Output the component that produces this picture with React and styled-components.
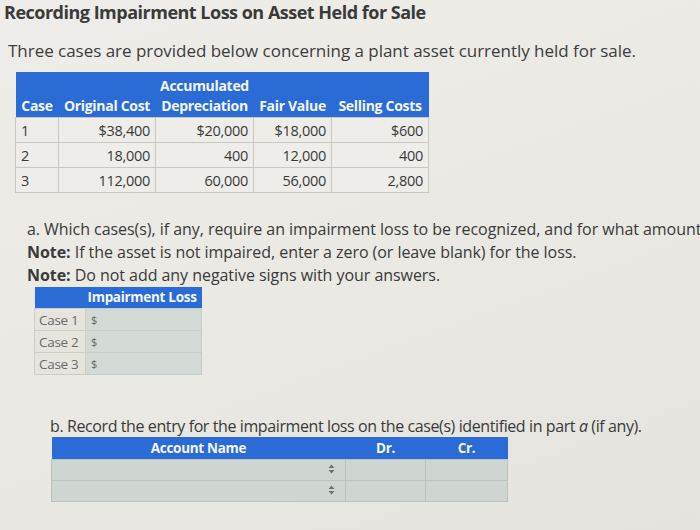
import React from "react";
import styled, { createGlobalStyle } from "styled-components";

const GlobalStyle = createGlobalStyle`
  html, body {
    margin: 0;
    padding: 0;
    background: #ebeae5;
  }
  body {
    font-family: "Open Sans", "Liberation Sans", sans-serif;
    color: #363636;
  }
`;

const Page = styled.div`
  width: 700px;
  height: 530px;
  overflow: hidden;
  background: linear-gradient(160deg, #eeede9 0%, #e9e8e2 60%, #e4e3dd 100%);
  white-space: nowrap;
`;

const Title = styled.h1`
  margin: 0;
  padding: 0 0 0 4px;
  font-size: 18px;
  line-height: 25px;
  font-weight: 700;
  letter-spacing: -0.5px;
  color: #3a3a3a;
`;

const Intro = styled.p`
  margin: 14px 0 0 8px;
  font-size: 17px;
  line-height: 23px;
  letter-spacing: -0.03px;
  color: #3c3c3c;
`;

const Table = styled.table`
  border-collapse: collapse;
  table-layout: fixed;
  margin-left: ${(p) => p.$left}px;
  margin-top: ${(p) => p.$top}px;
  width: ${(p) => p.$width}px;
  letter-spacing: -0.3px;
`;

const Head = styled.th`
  background: #2b6bd6;
  color: #f4f6fb;
  font-weight: 700;
  font-size: ${(p) => p.$size || 14}px;
  height: ${(p) => p.$h || 22}px;
  padding: 0 ${(p) => p.$pad ?? 3}px;
  text-align: ${(p) => p.$align || "center"};
  vertical-align: ${(p) => p.$valign || "middle"};
  line-height: 17px;
`;

const Cell = styled.td`
  background: #eeede9;
  border: 1px solid #c8c8c2;
  height: 24px;
  padding: 0 5px;
  font-size: 14.5px;
  color: #3a3a3a;
  text-align: ${(p) => p.$align || "right"};
`;

const Question = styled.div`
  margin: ${(p) => p.$top}px 0 0 ${(p) => p.$left}px;
  font-size: 16px;
  line-height: 23px;
  letter-spacing: ${(p) => p.$spacing ?? -0.05}px;
  color: #3a3a3a;

  b {
    font-weight: 700;
  }
`;

const LabelCell = styled.td`
  background: #e6e4dd;
  border: 1px solid #cfcdc6;
  height: 21px;
  padding: 0 4px;
  font-size: 13.5px;
  color: #6a6a6a;
`;

const InputCell = styled.td`
  background: #d3d9d5;
  border: 1px solid #c6ccc8;
  padding: 0 5px;
  font-size: 11px;
  color: #5c6a66;
`;

const EntryCell = styled.td`
  background: #cfd6d2;
  border: 1px solid #bcc3bf;
  height: 20px;
  padding: 0 10px;
  text-align: right;
  color: #6e7773;
  font-size: 10px;
`;

const SortIcon = () => (
  <svg width="7" height="10" viewBox="0 0 7 10">
    <path d="M3.5 0.5 L6.5 4 H0.5 Z M3.5 9.5 L6.5 6 H0.5 Z" fill="#6b7470" />
  </svg>
);

const cases = [
  ["1", "$38,400", "$20,000", "$18,000", "$600"],
  ["2", "18,000", "400", "12,000", "400"],
  ["3", "112,000", "60,000", "56,000", "2,800"],
];

export default function App() {
  return (
    <Page>
      <GlobalStyle />
      <Title>Recording Impairment Loss on Asset Held for Sale</Title>
      <Intro>
        Three cases are provided below concerning a plant asset currently held for sale.
      </Intro>

      <Table $left={15} $top={10} $width={413}>
        <colgroup>
          <col style={{ width: 43 }} />
          <col style={{ width: 97 }} />
          <col style={{ width: 98 }} />
          <col style={{ width: 78 }} />
          <col style={{ width: 97 }} />
        </colgroup>
        <thead>
          <tr>
            <Head $h={22} />
            <Head $h={22} />
            <Head $h={22} $valign="bottom">Accumulated</Head>
            <Head $h={22} />
            <Head $h={22} />
          </tr>
          <tr>
            <Head $h={23}>Case</Head>
            <Head $h={23}>Original Cost</Head>
            <Head $h={23}>Depreciation</Head>
            <Head $h={23}>Fair Value</Head>
            <Head $h={23}>Selling Costs</Head>
          </tr>
        </thead>
        <tbody>
          {cases.map((row) => (
            <tr key={row[0]}>
              {row.map((v, i) => (
                <Cell key={i} $align={i === 0 ? "left" : "right"}>
                  {v}
                </Cell>
              ))}
            </tr>
          ))}
        </tbody>
      </Table>

      <Question $top={25} $left={27}>
        a. Which cases(s), if any, require an impairment loss to be recognized, and for what amount?
        <br />
        <b>Note:</b> If the asset is not impaired, enter a zero (or leave blank) for the loss.
        <br />
        <b>Note:</b> Do not add any negative signs with your answers.
      </Question>

      <Table $left={34} $top={0} $width={167}>
        <colgroup>
          <col style={{ width: 51 }} />
          <col style={{ width: 116 }} />
        </colgroup>
        <thead>
          <tr>
            <Head $h={21} />
            <Head $h={21} $align="left" $pad={2} $size={13.5}>
              Impairment Loss
            </Head>
          </tr>
        </thead>
        <tbody>
          {[1, 2, 3].map((n) => (
            <tr key={n}>
              <LabelCell>Case {n}</LabelCell>
              <InputCell>$</InputCell>
            </tr>
          ))}
        </tbody>
      </Table>

      <Question $top={40} $left={50} $spacing={-0.4}>
        b. Record the entry for the impairment loss on the case(s) identified in part <i>a</i> (if any).
      </Question>

      <Table $left={51} $top={-1} $width={456}>
        <colgroup>
          <col style={{ width: 294 }} />
          <col style={{ width: 80 }} />
          <col style={{ width: 82 }} />
        </colgroup>
        <thead>
          <tr>
            <Head $h={22} $size={13.5}>Account Name</Head>
            <Head $h={22} $size={13.5}>Dr.</Head>
            <Head $h={22} $size={13.5}>Cr.</Head>
          </tr>
        </thead>
        <tbody>
          {[0, 1].map((r) => (
            <tr key={r}>
              <EntryCell>
                <SortIcon />
              </EntryCell>
              <EntryCell />
              <EntryCell />
            </tr>
          ))}
        </tbody>
      </Table>
    </Page>
  );
}
